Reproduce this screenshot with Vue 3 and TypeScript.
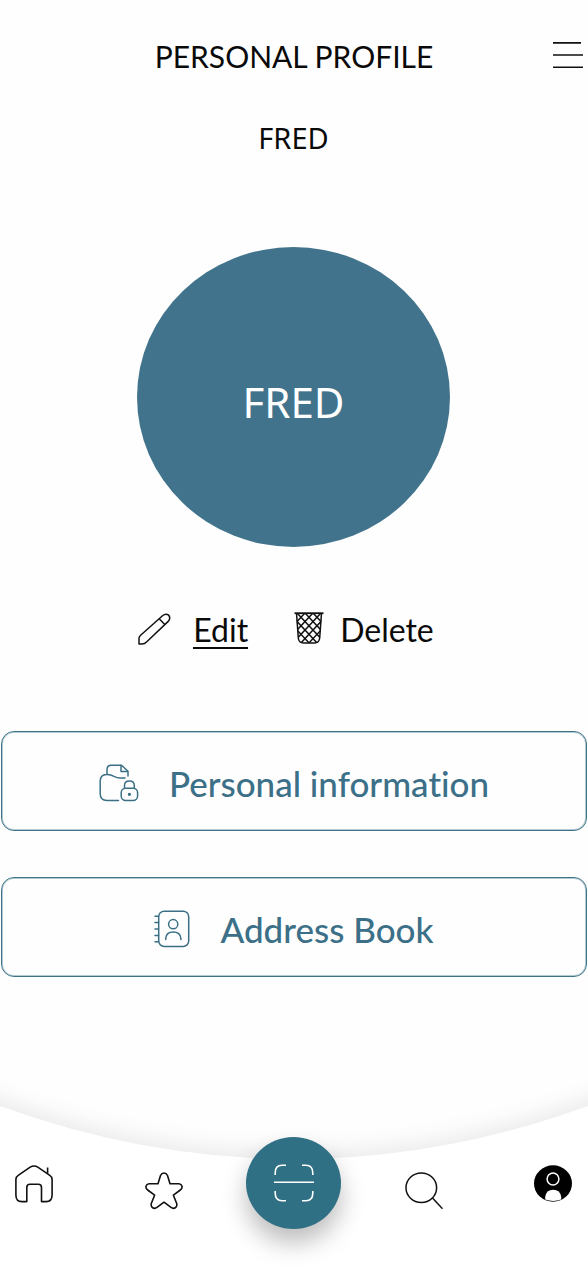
<script setup lang="ts">
interface MenuEntry {
  id: 'info' | 'book'
  label: string
}

const userName = 'FRED'

const entries: MenuEntry[] = [
  { id: 'info', label: 'Personal information' },
  { id: 'book', label: 'Address Book' },
]
</script>

<template>
  <div class="screen">
    <header class="top">
      <h1>PERSONAL PROFILE</h1>
      <button class="burger" type="button" aria-label="Open menu">
        <svg width="30" height="28" viewBox="0 0 30 28" fill="none" stroke="#111" stroke-width="1.6">
          <path d="M0 0.9H28M0 13H30M0 25.2H30" />
        </svg>
      </button>
    </header>

    <main>
      <p class="name">{{ userName }}</p>
      <div class="avatar">{{ userName }}</div>

      <div class="actions">
        <button class="action" type="button">
          <svg width="34" height="34" viewBox="0 0 34 34" fill="none" stroke="#111" stroke-width="1.5" stroke-linejoin="round">
            <path d="M2 32V26.5Q2 24.6 3.6 23.2L25.8 3.5Q29 1 31.7 3.2Q34 6.2 31.2 9.4L9.8 29.7Q7.6 32 5 32Z" />
            <path d="M22.2 6.8L27.8 12.5" />
          </svg>
          <span class="underlined">Edit</span>
        </button>
        <button class="action delete" type="button">
          <svg width="30" height="32" viewBox="0 0 30 32" fill="none" stroke="#111" stroke-width="1.5">
            <defs>
              <clipPath id="basket">
                <path d="M2 1H28L25.8 26Q25.2 31 20.5 31H9.5Q4.8 31 4.2 26Z" />
              </clipPath>
            </defs>
            <path d="M0.5 1.2H29.5" stroke-width="1.8" />
            <path d="M2.5 1L4.3 26Q4.8 31 9.5 31H20.5Q25.2 31 25.7 26L27.5 1" />
            <path
              clip-path="url(#basket)"
              d="M-13 1L17 33M-5 1L25 33M3 1L33 33M11 1L41 33M19 1L49 33M43 1L13 33M35 1L5 33M27 1L-3 33M19 1L-11 33M11 1L-19 33"
            />
          </svg>
          <span>Delete</span>
        </button>
      </div>

      <div class="entries">
        <button v-for="entry in entries" :key="entry.id" class="entry" type="button">
          <svg
            v-if="entry.id === 'info'"
            width="40" height="38" viewBox="0 0 40 38" fill="none" stroke="#3b7084" stroke-width="1.5"
            stroke-linecap="round" stroke-linejoin="round"
          >
            <path d="M8 10V5.5Q8 1.2 12.3 1.2H22.5L29 7.3V12" />
            <path d="M22 1.5V7.4H28.5" />
            <path d="M19.5 36.5H8Q1.2 36.5 1.2 29.7V17.3Q1.2 10.5 7.5 10.5Q11.5 10.3 15 12.4Q18 14 21 14H26" />
            <rect x="22.2" y="24.2" width="16.4" height="12.3" rx="4.5" />
            <path d="M25.5 24V21.5Q25.5 17 30.4 17Q35.3 17 35.3 21.5V24" />
            <circle cx="30.4" cy="30.3" r="0.9" fill="#3b7084" />
          </svg>
          <svg
            v-else
            width="36" height="38" viewBox="0 0 36 38" fill="none" stroke="#3b7084" stroke-width="1.5"
            stroke-linecap="round"
          >
            <rect x="4.7" y="1.2" width="30" height="35.3" rx="5.5" />
            <path d="M1 6.3H4.5M1 12.5H4.5M1 19H4.5M1 25.5H4.5M1 31.8H4.5" />
            <circle cx="19.2" cy="14.2" r="4.6" />
            <path d="M11.7 29.5V28.5Q12.2 22 19.2 22Q26.3 22 26.9 28.5V29.5" />
          </svg>
          <span>{{ entry.label }}</span>
        </button>
      </div>
    </main>

    <nav class="tabs" aria-label="Main">
      <svg class="curve" viewBox="0 0 588 201" preserveAspectRatio="none" aria-hidden="true">
        <path d="M-80 3Q-40 22 0 36Q145 89 294 89Q443 89 588 36Q628 22 668 3V260H-80Z" fill="#fff" />
      </svg>
      <a class="tab high" href="#" aria-label="Home">
        <svg width="38" height="38" viewBox="0 0 38 38" fill="none" stroke="#111" stroke-width="1.6" stroke-linejoin="round">
          <path d="M0.9 14.5Q0.9 11.8 3.2 10.4L15.2 2.2Q19 -0.3 22.8 2.2L34.8 10.4Q37.1 11.8 37.1 14.5V30Q37.1 36.6 31 36.6H26.5V22.5Q26.5 19.3 23.3 19.3H15Q11.8 19.3 11.8 22.5V36.6H7Q0.9 36.6 0.9 30Z" />
          <path d="M32.6 2.5V8.5" />
        </svg>
      </a>
      <a class="tab" href="#" aria-label="Favourites">
        <svg width="38" height="38" viewBox="0 0 38 38" fill="none" stroke="#111" stroke-width="1.6" stroke-linejoin="round">
          <path d="M15.5 3.5Q16.7 1 19 1Q21.3 1 22.5 3.5L25 11.7H34Q36.4 11.9 37 14.2Q37.5 16.5 35.3 18L28.4 23.2L31.7 31.5Q32.4 34.3 30.3 35.8Q28.2 37 26 35.4L19 30.2L12 35.4Q9.8 37 7.7 35.8Q5.6 34.3 6.3 31.5L9.6 23.2L2.7 18Q0.5 16.5 1 14.2Q1.6 11.9 4 11.7H13Z" />
        </svg>
      </a>
      <button class="scan" type="button" aria-label="Scan">
        <svg width="40" height="38" viewBox="0 0 40 38" fill="none" stroke="#fff" stroke-width="1.6">
          <path d="M1.2 11V9Q1.2 1.2 8 1.2H12M28 1.2H32Q38.8 1.2 38.8 9V11M38.8 27V29Q38.8 36.8 32 36.8H28M12 36.8H8Q1.2 36.8 1.2 29V27M0 18.3H40" />
        </svg>
      </button>
      <a class="tab" href="#" aria-label="Search">
        <svg width="38" height="38" viewBox="0 0 38 38" fill="none" stroke="#111" stroke-width="1.5">
          <ellipse cx="16.3" cy="15.8" rx="15.3" ry="14.8" />
          <path d="M27.5 26L37.5 36.7" />
        </svg>
      </a>
      <a class="tab high" href="#" aria-label="Profile" aria-current="page">
        <svg width="38" height="38" viewBox="0 0 38 38">
          <ellipse cx="19" cy="18.5" rx="19" ry="18.2" fill="#000" />
          <circle cx="19" cy="14" r="5.9" fill="#000" stroke="#fff" stroke-width="1.5" />
          <path d="M11.2 34.5V32Q12.2 24.8 19.2 24.8Q26.2 24.8 27.2 32V34.5Q19.2 37.3 11.2 34.5Z" fill="#fff" />
        </svg>
      </a>
    </nav>
  </div>
</template>

<style>
body {
  background: #fefefe;
}
</style>

<style scoped>
.screen {
  display: flex;
  flex-direction: column;
  min-height: 100vh;
  font-family: Lato, 'Open Sans', sans-serif;
  font-variant-ligatures: none;
  color: #0a0a0a;
}

button {
  border: 0;
  padding: 0;
  background: none;
  font: inherit;
  font-variant-ligatures: none;
  color: inherit;
  cursor: pointer;
}

svg {
  display: block;
  flex: none;
}

.top {
  display: grid;
  grid-template-columns: 1fr auto 1fr;
  align-items: center;
  padding: 38px 5px 0;
}

h1 {
  grid-column: 2;
  margin: 0;
  font-size: 30px;
  font-weight: 400;
  line-height: 36px;
}

.burger {
  justify-self: end;
}

main {
  display: flex;
  flex-direction: column;
  align-items: center;
  padding-right: 1px;
}

.name {
  margin: 46px 0 0;
  font-family: 'Noto Sans', 'Open Sans', sans-serif;
  font-size: 29px;
  line-height: 36px;
}

.avatar {
  display: flex;
  align-items: center;
  justify-content: center;
  box-sizing: border-box;
  width: 313px;
  height: 300px;
  margin-top: 91px;
  padding-top: 8px;
  border-radius: 50%;
  background: #41748c;
  color: #fff;
  font-family: 'Noto Sans', 'Open Sans', sans-serif;
  font-size: 42px;
}

.actions {
  display: flex;
  gap: 46px;
  margin-top: 65px;
  padding-right: 16px;
  font-size: 32px;
  line-height: 35px;
}

.action {
  display: flex;
  align-items: flex-start;
  gap: 22px;
}

.action.delete {
  gap: 16px;
}

.underlined {
  border-bottom: 2px solid #0a0a0a;
}

.entries {
  display: flex;
  flex-direction: column;
  gap: 46px;
  align-self: stretch;
  margin: 82px 0 0 1px;
}

.entry {
  display: flex;
  align-items: center;
  justify-content: center;
  gap: 30px;
  box-sizing: border-box;
  height: 100px;
  padding: 3px 0 0;
  border: 1px solid #3f7488;
  border-radius: 13px;
  box-shadow: inset 0 0 0 1px #b4cad2;
  color: #3c7088;
  font-size: 35px;
  font-weight: 500;
}

.tabs {
  position: relative;
  display: flex;
  align-items: flex-start;
  justify-content: space-between;
  box-sizing: border-box;
  height: 201px;
  margin-top: auto;
  padding: 67px 16px 0 15px;
  overflow: hidden;
}

.curve {
  position: absolute;
  inset: 0;
  width: 100%;
  height: 100%;
  overflow: visible;
  filter: drop-shadow(0 -8px 10px rgba(0, 0, 0, 0.07));
}

.tab {
  position: relative;
  margin-top: 35px;
}

.tab.high {
  margin-top: 28px;
}

.scan {
  position: relative;
  display: flex;
  align-items: center;
  justify-content: center;
  width: 95px;
  height: 92px;
  margin: 0 -28px;
  border-radius: 50%;
  background: #307085;
  box-shadow: 0 14px 24px rgba(0, 0, 0, 0.26);
}
</style>
